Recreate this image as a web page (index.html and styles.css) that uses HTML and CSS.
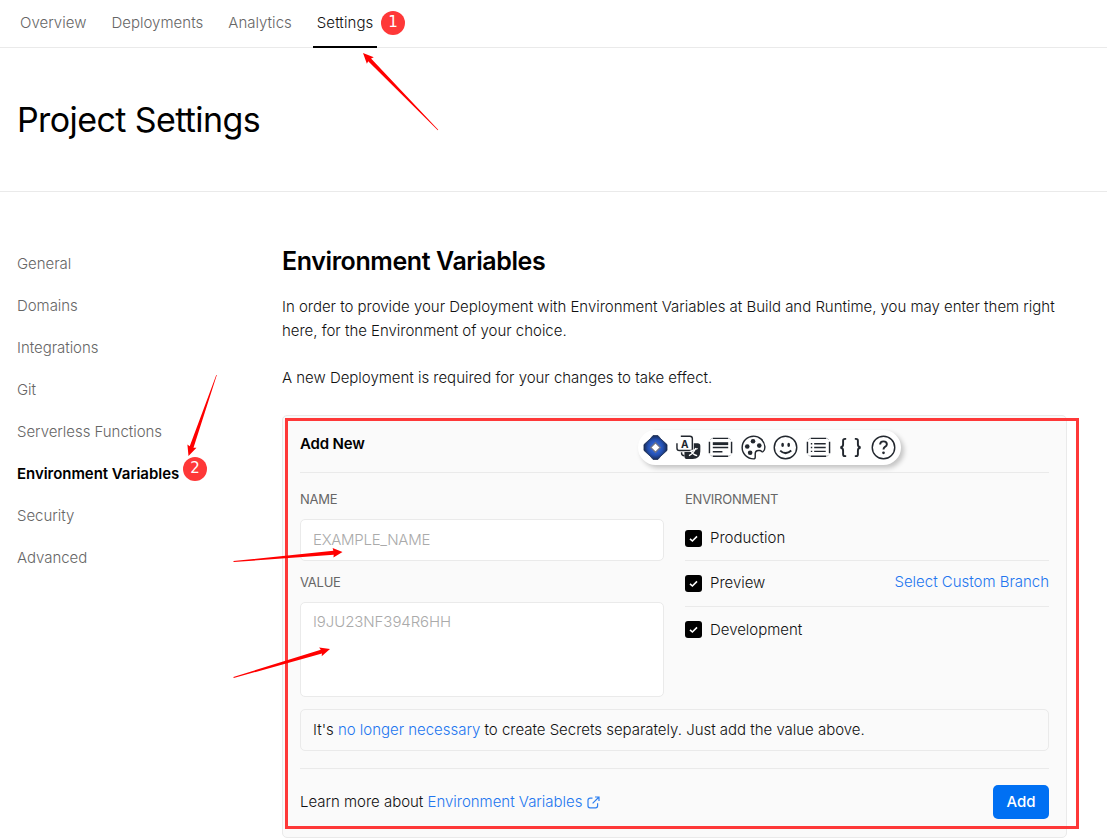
FILE: index.html
```
<!DOCTYPE html>
<html lang="en">
<head>
<meta charset="utf-8">
<title>Project Settings</title>
<link rel="stylesheet" href="styles.css">
</head>
<body>
<nav class="tabs">
  <a class="tab">Overview</a>
  <a class="tab">Deployments</a>
  <a class="tab">Analytics</a>
  <a class="tab tab-active">Settings</a>
</nav>
<header class="page-head"><h1 class="title">Project Settings</h1></header>
<div class="layout">
  <aside class="side">
    <a class="side-item">General</a>
    <a class="side-item">Domains</a>
    <a class="side-item">Integrations</a>
    <a class="side-item">Git</a>
    <a class="side-item">Serverless Functions</a>
    <a class="side-item side-active">Environment Variables</a>
    <a class="side-item">Security</a>
    <a class="side-item">Advanced</a>
  </aside>
  <main class="main">
    <h2 class="heading">Environment Variables</h2>
    <p class="para">In order to provide your Deployment with Environment Variables at Build and Runtime, you may enter them right<br>here, for the Environment of your choice.</p>
    <p class="para para-second">A new Deployment is required for your changes to take effect.</p>
    <section class="card">
      <div class="card-head">Add New</div>
      <div class="cols">
        <div class="col">
          <div class="label">NAME</div>
          <div class="input input-name">EXAMPLE_NAME</div>
          <div class="label label-value">VALUE</div>
          <div class="input area">I9JU23NF394R6HH</div>
        </div>
        <div class="col">
          <div class="label label-env">ENVIRONMENT</div>
          <div class="env-row env-first"><svg class="check" viewBox="0 0 17 17"><rect width="17" height="17" rx="3"/><path d="M5 8.800l2.400 2.200L12 6.400"/></svg><span>Production</span></div>
          <div class="env-row"><svg class="check" viewBox="0 0 17 17"><rect width="17" height="17" rx="3"/><path d="M5 8.800l2.400 2.200L12 6.400"/></svg><span>Preview</span><a class="link branch">Select Custom Branch</a></div>
          <div class="env-row env-last"><svg class="check" viewBox="0 0 17 17"><rect width="17" height="17" rx="3"/><path d="M5 8.800l2.400 2.200L12 6.400"/></svg><span>Development</span></div>
        </div>
      </div>
      <div class="note"><span>It's <a class="link">no longer necessary</a> to create Secrets separately. Just add the value above.</span></div>
      <div class="card-foot">
        <span class="learn">Learn more about <a class="link">Environment Variables</a></span>
        <svg class="ext" viewBox="0 0 13 13"><path d="M5.500 2.200H3A2 2 0 0 0 1 4.200v5.600a2 2 0 0 0 2 2h5.600a2 2 0 0 0 2-2V7.300M8 1h4v4M12 1L5.600 7.400"/></svg>
        <button class="add">Add</button>
      </div>
    </section>
  </main>
</div>

<div class="toolbar">
  <svg class="tool" viewBox="0 0 26 26">
    <defs><radialGradient id="gem"><stop offset="0.3" stop-color="#3266d8"/><stop offset="0.65" stop-color="#2450b0"/><stop offset="1" stop-color="#172b58"/></radialGradient></defs>
    <path d="M10.500 .5h5l3 3.500 6.500 6v6L18.500 22l-3 3.500h-5l-3-3.500L1 16v-6l6.500-6z" fill="url(#gem)" stroke="#1c2c50" stroke-width=".8"/>
    <path d="M13 8l5 5-5 5-5-5z" fill="#fff" stroke="#6b7187" stroke-width="1.300"/>
  </svg>
  <svg class="tool" viewBox="0 0 26 26">
    <path d="M5 1.200H14.500q2.500 0 2.500 2.500v12.500H3.500Q1 16.200 1 13.500V8.500" class="ln"/>
    <text x="9" y="13" class="letter">A</text>
    <path d="M18.500 8.500H22.500q2.800 0 2.800 2.800V17q0 8-8 8h-5.500q-3 0-3-3v-4.300h6.500q3.200 0 3.200-3.200z" fill="#22272e"/>
    <path d="M13.500 21.500q5-2.500 7-8M15.500 16.500q2 4 6.500 5M14.500 17l8-3" fill="none" stroke="#fff" stroke-width="1.300"/>
    <path d="M5.800 18v1q0 2.500 3 2.500" class="ln"/>
  </svg>
  <svg class="tool" viewBox="0 0 26 26">
    <path d="M5 3.500h16M5 22h16M1.500 7v12M24.500 7v12" class="ln"/><path d="M5 3.500Q3 3.500 2.300 5M21 3.500q2 0 2.700 1.500M5 22q-2 0-2.700-1.500M21 22q2 0 2.700-1.500" class="faint"/>
    <path d="M5 9h16" stroke="#22272e" stroke-width="3"/><path d="M5 13h16M5 17.500h10" class="ln"/>
  </svg>
  <svg class="tool" viewBox="0 0 26 26">
    <path d="M13 1.200a11.800 11.800 0 0 0 0 23.600q1.800 0 1.800-2v-3.200q0-3.400 3.300-3.400h1.400q1.200 0 1.800.9t1.700.1Q25 15.500 24.800 12A11.800 11.800 0 0 0 13 1.200z" class="ln"/>
    <g fill="#22272e"><circle cx="12.500" cy="6.500" r="2.400"/><circle cx="6.500" cy="12" r="2.400"/><circle cx="9.500" cy="18.500" r="2.400"/><circle cx="19" cy="11" r="2.400"/></g>
  </svg>
  <svg class="tool" viewBox="0 0 26 26">
    <circle cx="13" cy="13" r="11.700" class="ln"/><ellipse cx="10" cy="10.300" rx="1.400" ry="2.200" fill="#22272e"/><ellipse cx="16.300" cy="10.300" rx="1.400" ry="2.200" fill="#22272e"/>
    <path d="M7.500 16.200q5.500 5.300 11.500 0" class="ln ln-bold"/>
  </svg>
  <svg class="tool" viewBox="0 0 26 26">
    <path d="M5 3.500h16M5 22h16M1.500 7v12M24.500 7v12M8.500 9h12M8.500 13h12M8.500 17h12M5 9h1.500M5 13h1.500M5 17h1.500" class="ln"/><path d="M5 3.500Q3 3.500 2.300 5M21 3.500q2 0 2.700 1.500M5 22q-2 0-2.700-1.500M21 22q2 0 2.700-1.500" class="faint"/>
  </svg>
  <svg class="tool" viewBox="0 0 26 26">
    <path d="M8.500 4H7.300q-2 0-2 2v4q0 2.500-2.800 3 2.800.5 2.800 3v4q0 2 2 2h1.200M17.500 4h1.200q2 0 2 2v4q0 2.500 2.800 3-2.800.5-2.800 3v4q0 2-2 2h-1.200" class="ln ln-bold"/>
  </svg>
  <svg class="tool" viewBox="0 0 26 26">
    <circle cx="13" cy="13" r="11.700" class="ln"/><path d="M9.500 10q0-3.400 3.500-3.400t3.500 3q0 1.700-2 2.800-1.500.9-1.500 2.600" class="ln ln-bold"/><circle cx="13" cy="18.500" r="1.400" fill="#22272e"/>
  </svg>
</div>

<div class="frame"></div>
<svg class="arrows" viewBox="0 0 1107 839">
  <path transform="translate(363 53) rotate(45.750)" d="M0 0L10.500-4.800 9.500-2 107.500-.3V.3L9.500 2 10.500 4.800z"/>
  <path transform="translate(188.500 456) rotate(-70.900)" d="M0 0L10.500-4.800 9.500-2 85.700-.3V.3L9.500 2 10.500 4.800z"/>
  <path transform="translate(342.500 552) rotate(175)" d="M0 0L9.500-4.800 9-2 109.400-.5V.5L9 2 9.500 4.800z"/>
  <path transform="translate(330 649) rotate(163.500)" d="M0 0L10-4.600 9-2 100.600-.5V.5L9 2 10 4.600z"/>
</svg>
<div class="badge badge-one">1</div>
<div class="badge badge-two">2</div>
</body>
</html>
```
FILE: styles.css
```
* { box-sizing: border-box; }
body { margin: 0; width: 1107px; height: 839px; overflow: hidden; position: relative; background: #fff; color: #111; font: 350 15px/23.5px Inter, "Liberation Sans", sans-serif; letter-spacing: -0.020px; }
h1, h2, p { margin: 0; }
.tabs { display: flex; height: 48px; padding-left: 16px; gap: 17px; border-bottom: 1px solid #eaeaea; }
.tab { height: 48px; padding: 0 4px; line-height: 46px; font-size: 15px; letter-spacing: 0.020px; color: #666; border-bottom: 2px solid transparent; }
.tab-active { color: #111; border-color: #000; letter-spacing: 0.080px; }
.page-head { height: 144px; padding-left: 17px; border-bottom: 1px solid #eaeaea; display: flex; align-items: center; }
.title { font-size: 34px; font-weight: 400; line-height: 44px; letter-spacing: -0.600px; color: #000; }
.layout { display: flex; padding: 50px 0 0 17px; }
.side { width: 265px; display: flex; flex-direction: column; }
.side-item { height: 42px; line-height: 43px; color: #666; letter-spacing: -0.040px; }
.side-active { color: #000; font-weight: 600; }
.main { width: 785px; }
.heading { font-size: 25px; line-height: 36px; font-weight: 600; letter-spacing: -0.400px; color: #000; margin-top: 1px; }
.para { margin-top: 16px; white-space: nowrap; }
.para-second { margin-top: 24px; }
.card { margin-top: 25px; height: 423px; border: 1px solid #eaeaea; border-radius: 5px; background: #fafafa; padding: 0 17px; }
.card-head { height: 57px; line-height: 56px; font-weight: 600; letter-spacing: -0.150px; color: #000; border-bottom: 1px solid #eaeaea; }
.cols { display: flex; gap: 21px; }
.col { width: 364px; }
.label { font-size: 13px; line-height: 20px; letter-spacing: -0.240px; font-weight: 400; color: #666; margin-top: 16px; }
.input { margin-top: 10px; height: 42px; padding: 0 12px; line-height: 40px; background: #fff; border: 1px solid #eaeaea; border-radius: 5px; color: #aaa; letter-spacing: -0.080px; }
.input-name { letter-spacing: -0.280px; }
.label-value { margin-top: 11px; }
.area { height: 95px; line-height: 38px; }
.env-row { height: 46px; display: flex; align-items: center; gap: 8px; border-bottom: 1px solid #eaeaea; }
.env-first { padding-top: 2px; }
.label-env { margin-bottom: 6px; }
.env-last { border-bottom: 0; }
.branch { margin-left: auto; padding-bottom: 3px; }
.check { width: 17px; height: 17px; }
.check path { fill: none; stroke: #fff; stroke-width: 1.600; }
.link { color: #2376ef; }
.note { margin-top: 12px; height: 42px; border: 1px solid #eaeaea; border-radius: 5px; padding-left: 12px; line-height: 40px; }
.card-foot { margin-top: 17px; height: 68px; border-top: 1px solid #eaeaea; display: flex; align-items: center; }
.ext { width: 13px; height: 13px; margin-left: 5px; fill: none; stroke: #2d7ff0; stroke-width: 1.200; }
.add { margin-left: auto; width: 56px; height: 34px; border: 0; border-radius: 5px; background: #0070f3; color: #fff; font: 500 15px/34px Inter, sans-serif; padding: 0; }
.toolbar { position: absolute; left: 638px; top: 430px; width: 263px; height: 35px; border-radius: 18px; background: #fff; box-shadow: 3px 3px 5px rgba(0,0,0,.22); display: flex; align-items: center; padding-left: 5px; gap: 7.500px; }
.tool { width: 25px; height: 25px; flex: none; }
.ln { fill: none; stroke: #22272e; stroke-width: 1.500; }
.ln-bold { stroke-width: 2; }
.faint { fill: none; stroke: #b9bcc0; stroke-width: 1; }
.letter { font: 700 10.500px Inter, sans-serif; text-anchor: middle; fill: #22272e; }
.frame { position: absolute; left: 285px; top: 418px; width: 793.500px; height: 411px; border: 3px solid #fe3838; }
.arrows { position: absolute; left: 0; top: 0; width: 1107px; height: 839px; fill: #f00; }
.badge { position: absolute; width: 24px; height: 24px; border-radius: 50%; background: #fe3838; color: #fff; text-align: center; font: 400 15px/23px "DejaVu Sans", sans-serif; }
.badge-one { left: 381px; top: 11px; }
.badge-two { left: 183px; top: 457px; }
```
